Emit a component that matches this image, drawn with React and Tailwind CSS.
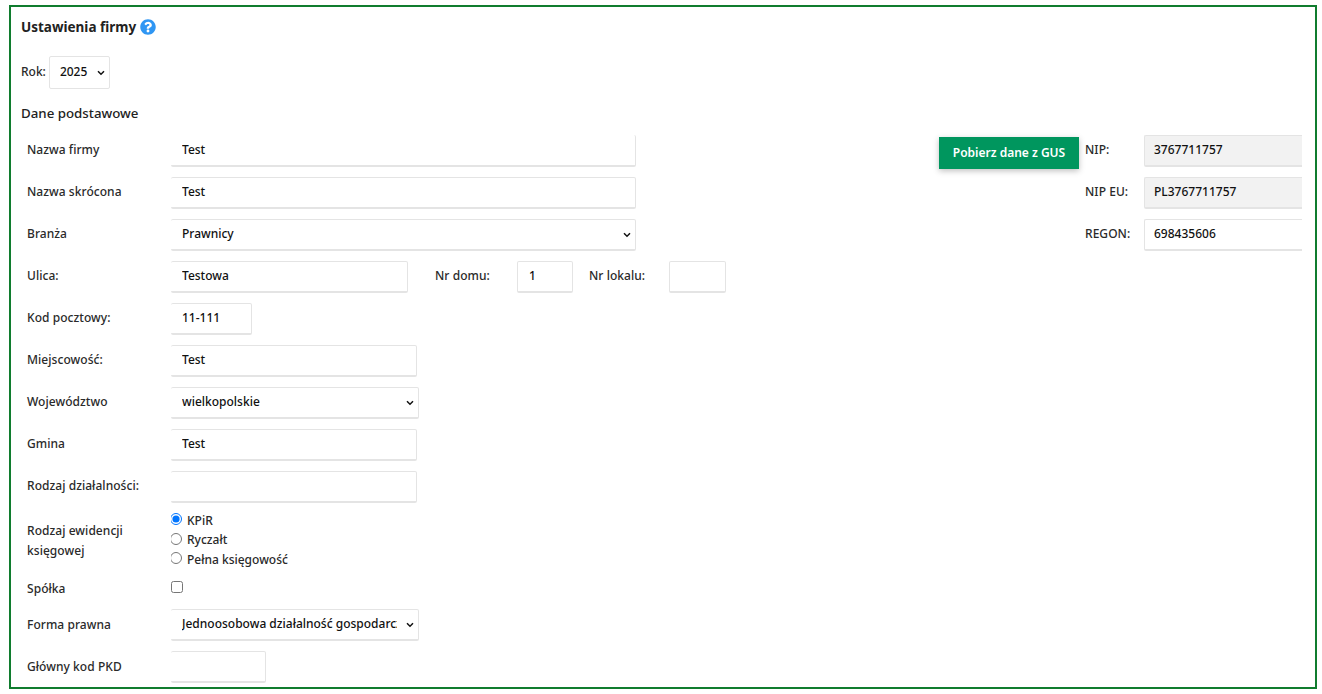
import { FaQuestionCircle } from 'react-icons/fa';

const BOX = 'h-[32px] border border-[#e4e4e4] border-b-2 rounded-[2px] pb-[2px] text-[12px] font-medium text-[#111] outline-none';
const INPUT = `${BOX} pl-[11px]`;
const TEXT = 'text-[12px] font-medium text-[#2a2a2a] tracking-[0.05px]';
const LABEL = `${TEXT} mb-[2px]`;

function Row({ label, labelClass = LABEL, children }) {
  return (
    <div className="flex items-center h-[32px] mb-[10px]">
      <label className={`${labelClass} w-[150px] shrink-0 pl-[6px]`}>{label}</label>
      {children}
    </div>
  );
}

function Chevron() {
  return (
    <svg viewBox="0 0 8 6" className="absolute right-[5px] top-1/2 -translate-y-1/2 w-[8px] h-[6px] pointer-events-none" fill="none" stroke="#111" strokeWidth="1.5">
      <path d="M1 1.2 L4 4.2 L7 1.2" />
    </svg>
  );
}

function Select({ width, value }) {
  return (
    <div className={`relative ${width}`}>
      <select className={`${INPUT} w-full bg-white border-l-0 appearance-none pr-[21px]`}>
        <option>{value}</option>
      </select>
      <Chevron />
    </div>
  );
}

function Radio({ label, checked }) {
  return (
    <label className="flex items-center h-[19.5px] text-[12px] font-medium text-[#2a2a2a]">
      <span className="w-[16px] h-[14px] overflow-hidden shrink-0 flex items-center -mt-[3px]">
        <input type="radio" name="ewidencja" defaultChecked={checked} className="m-0 -ml-[1px] w-[12px] h-[12px] accent-[#0075ff]" />
      </span>
      {label}
    </label>
  );
}

function SideRow({ label, value, muted }) {
  return (
    <div className="flex items-center h-[32px] mb-[10px]">
      <label className={`${LABEL} w-[59px] shrink-0`}>{label}</label>
      <input
        readOnly
        value={value}
        className={`${BOX} w-[158px] border-r-0 rounded-r-none pl-[9px] ${muted ? 'bg-[#f2f2f2]' : 'bg-white'}`}
      />
    </div>
  );
}

export default function App() {
  return (
    <div className="h-[694px] bg-white overflow-hidden pl-[9px] pt-[5px] font-['Noto_Sans',sans-serif]">
      <div className="w-[1308px] h-[684px] border-2 border-[#107c2e] overflow-hidden pl-[10px] pr-[13px] pt-[10px]">
        <div className="flex items-center h-[20px]">
          <h1 className="text-[13.5px] font-bold text-[#222]">Ustawienia firmy</h1>
          <FaQuestionCircle className="ml-[4px] w-[16px] h-[16px] text-[#2f96f3]" />
        </div>

        <div className="flex items-center mt-[19px] h-[33px]">
          <label className="text-[12px] font-medium text-[#2a2a2a] mr-[3px] mb-[2px]">Rok:</label>
          <div className="relative w-[61px]">
            <select className="w-full h-[33px] bg-white border border-[#e4e4e4] rounded-[2px] pl-[10px] pb-[2px] text-[12px] font-medium text-[#111] appearance-none outline-none">
              <option>2025</option>
            </select>
            <Chevron />
          </div>
        </div>

        <h2 className="mt-[15px] h-[20px] text-[13.3px] font-medium text-[#222]">Dane podstawowe</h2>

        <div className="flex mt-[11px]">
          <div>
            <Row label="Nazwa firmy">
              <input readOnly value="Test" className={`${INPUT} w-[465px] bg-white border-l-0 border-t-0`} />
            </Row>
            <Row label="Nazwa skrócona">
              <input readOnly value="Test" className={`${INPUT} w-[465px] bg-white border-l-0`} />
            </Row>
            <Row label="Branża">
              <Select width="w-[465px]" value="Prawnicy" />
            </Row>
            <Row label="Ulica:">
              <input readOnly value="Testowa" className={`${INPUT} w-[237px] bg-white border-l-0`} />
              <label className={`${LABEL} ml-[27px] w-[82px]`}>Nr domu:</label>
              <input readOnly value="1" className={`${INPUT} w-[56px] bg-white`} />
              <label className={`${LABEL} ml-[16px] w-[80px]`}>Nr lokalu:</label>
              <input readOnly value="" className={`${INPUT} w-[57px] bg-white`} />
            </Row>
            <Row label="Kod pocztowy:">
              <input readOnly value="11-111" className={`${INPUT} w-[81px] bg-white border-l-0`} />
            </Row>
            <Row label="Miejscowość:">
              <input readOnly value="Test" className={`${INPUT} w-[246px] bg-white border-l-0`} />
            </Row>
            <Row label="Województwo">
              <Select width="w-[248px]" value="wielkopolskie" />
            </Row>
            <Row label="Gmina">
              <input readOnly value="Test" className={`${INPUT} w-[246px] bg-white border-l-0`} />
            </Row>
            <Row label="Rodzaj działalności:">
              <input readOnly value="" className={`${INPUT} w-[246px] bg-white border-l-0`} />
            </Row>

            <div className="flex items-center h-[58px]">
              <label className={`${LABEL} w-[150px] shrink-0 pl-[6px] leading-[20px]`}>
                Rodzaj ewidencji<br />księgowej
              </label>
              <div className="flex flex-col -mt-[4px]">
                <Radio label="KPiR" checked />
                <Radio label="Ryczałt" />
                <Radio label="Pełna księgowość" />
              </div>
            </div>

            <div className="flex items-center h-[38px]">
              <label className={`${TEXT} mb-[3px] w-[150px] shrink-0 pl-[6px]`}>Spółka</label>
              <input type="checkbox" className="m-0 w-[12px] h-[12px] -mt-[7px]" />
            </div>

            <Row label="Forma prawna" labelClass={TEXT}>
              <Select width="w-[248px]" value="Jednoosobowa działalność gospodarcza" />
            </Row>
            <Row label="Główny kod PKD" labelClass={TEXT}>
              <input readOnly value="" className={`${INPUT} w-[95px] bg-white border-l-0`} />
            </Row>
          </div>

          <div className="ml-auto flex">
            <button className="w-[140px] h-[32px] mt-[2px] mr-[6px] bg-[#00965e] text-white text-[12px] font-semibold shadow-[0_2px_6px_rgba(0,0,0,0.25)]">
              Pobierz dane z GUS
            </button>
            <div>
              <SideRow label="NIP:" value="3767711757" muted />
              <SideRow label="NIP EU:" value="PL3767711757" muted />
              <SideRow label="REGON:" value="698435606" />
            </div>
          </div>
        </div>
      </div>
    </div>
  );
}
